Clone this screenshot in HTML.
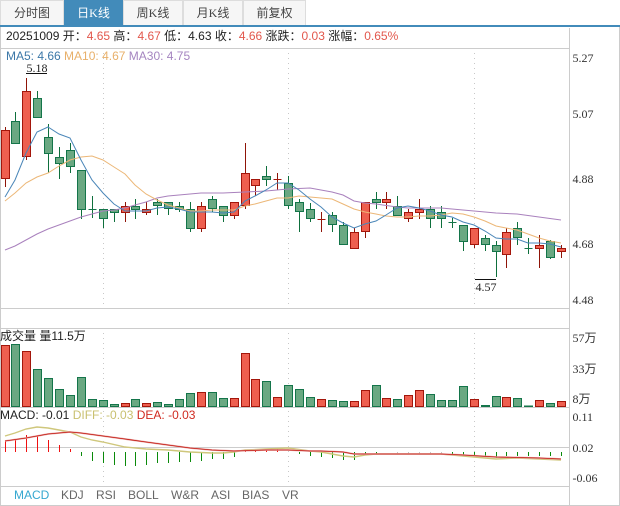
<!DOCTYPE html>
<html><head><meta charset="utf-8">
<style>
html,body{margin:0;padding:0;background:#fff}
#r{position:relative;width:620px;height:506px;overflow:hidden;background:#fff;font-family:"Liberation Sans","Noto Sans CJK SC",sans-serif;font-size:12px;color:#222}
#r svg{position:absolute;left:0;top:0}
.tab{position:absolute;top:0;height:25px;box-sizing:border-box;border:1px solid #ddd;border-bottom:0;background:#f6f6f6;color:#444;font:12px/25px "Liberation Serif","Noto Sans CJK SC",serif;text-align:center}
.tab.on{background:#428bba;color:#fff;border-color:#428bba}
.t{position:absolute;white-space:pre;line-height:14px}
.a{position:absolute;left:572.5px;white-space:pre;font:12px/14px "Liberation Serif","Noto Sans CJK SC",serif;color:#333}
.r{color:#e2574c}
</style></head><body>
<div id="r">
<div class="tab" style="left:0;width:64px">分时图</div>
<div class="tab on" style="left:64px;width:59px">日K线</div>
<div class="tab" style="left:123px;width:60px">周K线</div>
<div class="tab" style="left:183px;width:60px">月K线</div>
<div class="tab" style="left:243px;width:63px">前复权</div>

<svg width="620" height="506" viewBox="0 0 620 506" fill="none">
<rect x="0" y="25" width="620" height="2" fill="#428bba"/>
<path stroke="#cccccc" d="M.5 27V506M569.5 28V506M619.5 27V506M0 505.5H620M1 48.5H569M1 308.5H569M1 328.5H569M1 407.5H569M1 447.5H569M1 486.5H569"/>
<path stroke="#c8c8c8" stroke-dasharray="1 4" d="M103.5 53V306M288.5 53V306M474.5 53V306M103.5 333V405M288.5 333V405M474.5 333V405M103.5 411V484M288.5 411V484M474.5 411V484"/>

<!-- wicks -->
<path stroke="#8f1408" d="M5.5 127V187M26.5 78V160M125.5 202V222M146.5 202V215M201.5 202V232M234.5 202V219M245.5 143V209M255.5 179V196M277.5 173V190M321.5 212V232M354.5 228V248M365.5 202V238M386.5 192V209M408.5 209V222M419.5 199V219M474.5 228V248M506.5 228V268M539.5 235V268M561.5 245V258"/>
<path stroke="#0e6f3c" d="M15.5 112V144M37.5 91V117M48.5 124V173M59.5 147V179M70.5 143V173M81.5 170V219M92.5 196V218M103.5 209V228M114.5 209V222M135.5 199V219M157.5 199V215M168.5 202V215M179.5 202V212M190.5 202V232M212.5 196V212M223.5 206V222M266.5 166V186M288.5 176V209M299.5 199V232M310.5 203V222M332.5 212V232M343.5 222V245M376.5 192V209M397.5 196V215M430.5 206V228M441.5 206V228M452.5 218V228M463.5 225V251M485.5 235V251M496.5 241V277M517.5 222V245M528.5 238V254M550.5 240V259"/>
<!-- candle bodies -->
<path fill="#ee5f4f" stroke="#a3160b" d="M1.5 130.5h8V178.5h-8zM22.5 91.5h8V156.5h-8zM121.5 206.5h8V212.5h-8zM142.5 209.5h8V212.5h-8zM197.5 206.5h8V228.5h-8zM230.5 202.5h8V215.5h-8zM241.5 173.5h8V205.5h-8zM251.5 179.5h8V185.5h-8zM273.5 179.5h8M317.5 219.5h8M350.5 232.5h8V248.5h-8zM361.5 202.5h8V231.5h-8zM382.5 199.5h8V202.5h-8zM404.5 212.5h8V218.5h-8zM415.5 209.5h8V212.5h-8zM470.5 228.5h8V244.5h-8zM502.5 232.5h8V254.5h-8zM535.5 245.5h8V248.5h-8zM557.5 248.5h8V251.5h-8z"/>
<path fill="#6aa882" stroke="#14754a" d="M11.5 121.5h8V143.5h-8zM33.5 98.5h8V117.5h-8zM44.5 137.5h8V153.5h-8zM55.5 157.5h8V163.5h-8zM66.5 150.5h8V166.5h-8zM77.5 170.5h8V209.5h-8zM88.5 209.5h8M99.5 209.5h8V218.5h-8zM110.5 209.5h8V212.5h-8zM131.5 206.5h8V209.5h-8zM153.5 202.5h8V205.5h-8zM164.5 202.5h8V208.5h-8zM175.5 206.5h8V209.5h-8zM186.5 209.5h8V228.5h-8zM208.5 199.5h8V208.5h-8zM219.5 206.5h8V215.5h-8zM262.5 176.5h8V179.5h-8zM284.5 183.5h8V205.5h-8zM295.5 202.5h8V211.5h-8zM306.5 209.5h8V218.5h-8zM328.5 215.5h8V224.5h-8zM339.5 225.5h8V244.5h-8zM372.5 199.5h8V202.5h-8zM393.5 206.5h8V215.5h-8zM426.5 209.5h8V218.5h-8zM437.5 212.5h8V218.5h-8zM448.5 222.5h8M459.5 225.5h8V241.5h-8zM481.5 238.5h8V244.5h-8zM492.5 245.5h8V251.5h-8zM513.5 228.5h8V237.5h-8zM524.5 248.5h8M546.5 241.5h8V257.5h-8z"/>

<!-- moving averages -->
<polyline stroke="#a981bd" stroke-width="1" points="5,250 15,246 26,240 37,234 48,229 59,225 70,221 81,217 92,214 103,211 114,210 125,208 135,205 146,202 157,198 168,196 179,195 201,193 223,193 245,192 266,191 288,189 310,188 321,190 332,192 343,195 354,201 365,203 376,204 397,207 408,208 441,208 463,210 474,211 496,213 517,214 539,217 561,220"/>
<polyline stroke="#ecb777" stroke-width="1" points="5,201 15,193 26,183 37,177 48,173 59,166 70,160 81,157 92,156 103,160 114,167 125,174 135,185 146,194 157,200 168,205 179,208 190,211 201,211 212,210 223,210 234,210 245,206 255,204 266,201 277,198 288,198 299,196 310,197 321,198 332,199 343,204 354,209 365,212 376,214 386,216 397,217 408,217 419,216 430,216 441,215 452,213 463,214 474,217 485,221 496,226 506,228 517,230 528,234 539,238 550,241 561,243"/>
<polyline stroke="#4a86b8" stroke-width="1" points="5,197 15,180 26,153 37,132 48,127 59,134 70,138 81,160 92,180 103,193 114,204 125,211 135,211 146,211 157,208 168,207 179,209 190,212 201,212 212,212 223,213 234,212 245,201 255,196 266,190 277,183 288,183 299,190 310,199 321,207 332,217 343,223 354,228 365,224 376,221 386,215 397,208 408,206 419,208 430,211 441,215 452,217 463,222 474,225 485,231 496,238 506,239 517,239 528,243 539,243 550,244 561,247"/>

<path stroke="#111" d="M26 73.5H47M475 279.5H496"/>

<!-- volume -->
<path fill="#ee5f4f" stroke="#a3160b" d="M1.5 345.5h8V406.5h-8zM22.5 351.5h8V406.5h-8zM121.5 403.5h8V406.5h-8zM142.5 403.5h8V406.5h-8zM197.5 392.5h8V406.5h-8zM230.5 398.5h8V406.5h-8zM241.5 353.5h8V406.5h-8zM251.5 379.5h8V406.5h-8zM273.5 397.5h8V406.5h-8zM317.5 399.5h8V406.5h-8zM350.5 401.5h8V406.5h-8zM361.5 390.5h8V406.5h-8zM382.5 398.5h8V406.5h-8zM404.5 395.5h8V406.5h-8zM415.5 390.5h8V406.5h-8zM470.5 399.5h8V406.5h-8zM502.5 397.5h8V406.5h-8zM535.5 400.5h8V406.5h-8zM557.5 401.5h8V406.5h-8z"/>
<path fill="#6aa882" stroke="#14754a" d="M11.5 344.5h8V406.5h-8zM33.5 369.5h8V406.5h-8zM44.5 378.5h8V406.5h-8zM55.5 389.5h8V406.5h-8zM66.5 395.5h8V406.5h-8zM77.5 377.5h8V406.5h-8zM88.5 399.5h8V406.5h-8zM99.5 400.5h8V406.5h-8zM110.5 404.5h8V406.5h-8zM131.5 399.5h8V406.5h-8zM153.5 402.5h8V406.5h-8zM164.5 404.5h8V406.5h-8zM175.5 399.5h8V406.5h-8zM186.5 393.5h8V406.5h-8zM208.5 392.5h8V406.5h-8zM219.5 398.5h8V406.5h-8zM262.5 381.5h8V406.5h-8zM284.5 385.5h8V406.5h-8zM295.5 389.5h8V406.5h-8zM306.5 397.5h8V406.5h-8zM328.5 400.5h8V406.5h-8zM339.5 401.5h8V406.5h-8zM372.5 385.5h8V406.5h-8zM393.5 399.5h8V406.5h-8zM426.5 394.5h8V406.5h-8zM437.5 400.5h8V406.5h-8zM448.5 400.5h8V406.5h-8zM459.5 386.5h8V406.5h-8zM481.5 405.5h8V406.5h-8zM492.5 396.5h8V406.5h-8zM513.5 398.5h8V406.5h-8zM524.5 406h8V406.5h-8zM546.5 403.5h8V406.5h-8z"/>

<!-- MACD histogram -->
<path stroke="#f01010" d="M5.5 441V452M15.5 439V452M26.5 435V452M37.5 436V452M48.5 440V452M59.5 445V452M70.5 449V452M245.5 450V452M255.5 450V452M266.5 450V452M277.5 449V452"/>
<path stroke="#0a8a0a" d="M81.5 452V456M92.5 452V461M103.5 452V463M114.5 452V465M125.5 452V466M135.5 452V466M146.5 452V465M157.5 452V463M168.5 452V463M179.5 452V462M190.5 452V462M201.5 452V461M212.5 452V459M223.5 452V459M234.5 452V457M299.5 452V454M310.5 452V456M321.5 452V457M332.5 452V458M343.5 452V460M354.5 452V460M365.5 452V455M376.5 452V454M452.5 452V454M463.5 452V456M474.5 452V456M485.5 452V457M496.5 452V458M506.5 452V456M517.5 452V456M528.5 452V456M539.5 452V456M550.5 452V456M561.5 452V456"/>
<path stroke="#c4c4c4" d="M397.5 452V454M408.5 452V454M419.5 452V454M430.5 452V454M441.5 452V454"/>
<!-- MACD lines -->
<polyline stroke="#cfc77c" stroke-width="1.4" points="5,436 15,433 26,429 37,427 48,428 59,430 70,432 81,437 92,440 103,442 125,447 146,449 168,450 190,452 212,453 223,453 234,452 245,450 266,449 288,448 310,451 321,452 343,456 354,457 365,455 376,454 397,454 441,454 452,455 474,457 496,459 517,458 539,459 561,460"/>
<polyline stroke="#e8a8a8" stroke-width="1.8" points="5,441 26,438 48,434 70,432 81,433 103,436 125,439 146,442 168,445 190,448 212,450 234,451 266,450 288,450 310,451 321,451 343,452 354,454 376,454 441,454 463,455 496,457 539,458 561,459"/>
<polyline stroke="#c41a10" stroke-width=".8" points="5,441 26,438 48,434 70,432 81,433 103,436 125,439 146,442 168,445 190,448 212,450 234,451 266,450 288,450 310,451 321,451 343,452 354,454 376,454 441,454 463,455 496,457 539,458 561,459"/>
</svg>

<div class="t" style="left:6px;top:29px;color:#222">20251009 开：<span class="r">4.65</span> 高：<span class="r">4.67</span> 低：4.63 收：<span class="r">4.66</span> 涨跌：<span class="r">0.03</span> 涨幅：<span class="r">0.65%</span></div>
<div class="t" style="left:6px;top:49px"><span style="color:#3c78a8">MA5: 4.66</span> <span style="color:#e8b06a">MA10: 4.67</span> <span style="color:#a585c0">MA30: 4.75</span></div>
<div class="t" style="left:26.5px;top:61px;font-family:'Liberation Serif',serif;color:#222">5.18</div>
<div class="t" style="left:475.5px;top:280px;font-family:'Liberation Serif',serif;color:#222">4.57</div>

<div class="a" style="top:51px">5.27</div>
<div class="a" style="top:107px">5.07</div>
<div class="a" style="top:172px">4.88</div>
<div class="a" style="top:237px">4.68</div>
<div class="a" style="top:293px">4.48</div>
<div class="a" style="top:331px">57万</div>
<div class="a" style="top:362px">33万</div>
<div class="a" style="top:392px">8万</div>
<div class="a" style="top:410px">0.11</div>
<div class="a" style="top:441px">0.02</div>
<div class="a" style="top:471px">-0.06</div>

<div class="t" style="left:0;top:329px;color:#222">成交量 量11.5万</div>
<div class="t" style="left:0;top:408px"><span style="color:#222">MACD: -0.01</span> <span style="color:#c9c06f">DIFF: -0.03</span> <span style="color:#d02a20">DEA: -0.03</span></div>

<div class="t" style="left:14px;top:488px;color:#35a7d0">MACD</div>
<div class="t" style="left:61px;top:488px;color:#666">KDJ</div>
<div class="t" style="left:96px;top:488px;color:#666">RSI</div>
<div class="t" style="left:128px;top:488px;color:#666">BOLL</div>
<div class="t" style="left:171px;top:488px;color:#666">W&amp;R</div>
<div class="t" style="left:211px;top:488px;color:#666">ASI</div>
<div class="t" style="left:242px;top:488px;color:#666">BIAS</div>
<div class="t" style="left:282px;top:488px;color:#666">VR</div>
</div>
</body></html>
